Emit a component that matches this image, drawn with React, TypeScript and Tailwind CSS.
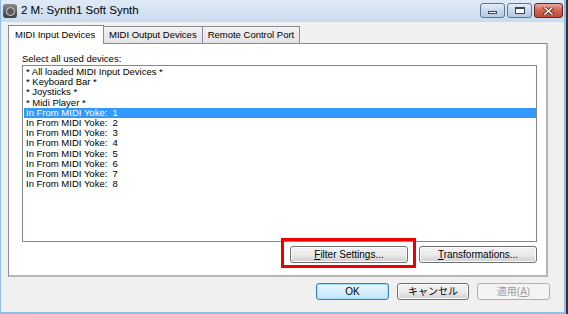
import type { ReactNode } from "react";

const ui = { fontFamily: '"Liberation Sans", "Noto Sans CJK JP", sans-serif' };

const devices = [
  "* All loaded MIDI Input Devices *",
  "* Keyboard Bar *",
  "* Joysticks *",
  "* Midi Player *",
  "In From MIDI Yoke:  1",
  "In From MIDI Yoke:  2",
  "In From MIDI Yoke:  3",
  "In From MIDI Yoke:  4",
  "In From MIDI Yoke:  5",
  "In From MIDI Yoke:  6",
  "In From MIDI Yoke:  7",
  "In From MIDI Yoke:  8",
];

function Button({
  children,
  w,
  variant = "normal",
}: {
  children: ReactNode;
  w: string;
  variant?: "normal" | "default" | "disabled";
}) {
  const cls =
    variant === "default"
      ? "border-[#3c7fb1] bg-gradient-to-b from-[#eaf6fd] to-[#bee6fd] text-black shadow-[inset_0_0_0_1px_#a8e0fb]"
      : variant === "disabled"
        ? "border-[#adb2b5] bg-[#f4f4f4] text-[#9c9c9c]"
        : "border-[#707070] bg-gradient-to-b from-[#f2f2f2] via-[#ebebeb] to-[#cfcfcf] text-black shadow-[inset_0_0_0_1px_#fcfcfc]";
  return (
    <div
      className={`${w} flex h-[17px] items-center justify-center rounded-[3px] border text-[10px] leading-none ${cls}`}
    >
      {children}
    </div>
  );
}

function Tab({ label, active }: { label: string; active?: boolean }) {
  if (active) {
    return (
      <div className="relative z-10 -mb-px flex h-[19px] w-[96px] items-center border border-b-0 border-[#898c95] bg-white pl-[6px] text-[9.5px]">
        {label}
      </div>
    );
  }
  return (
    <div className="-ml-px flex h-[17px] items-center border border-b-0 border-[#898c95] bg-gradient-to-b from-[#f2f2f2] to-[#e3e3e3] px-[5px] text-[9.5px]">
      {label}
    </div>
  );
}

function CaptionButton({ kind }: { kind: "min" | "max" | "close" }) {
  if (kind === "close") {
    return (
      <div className="flex h-[15px] w-[29px] items-center justify-center rounded-[3px] border border-[#5e2a24] bg-gradient-to-b from-[#e9a99a] via-[#d0634f] to-[#c24a35]">
        <svg width="11" height="8" viewBox="0 0 11 8">
          <path d="M2 1 L9 7 M9 1 L2 7" stroke="#4a1f18" strokeWidth="3" strokeLinecap="square" />
          <path d="M2 1 L9 7 M9 1 L2 7" stroke="#ffffff" strokeWidth="1.6" strokeLinecap="square" />
        </svg>
      </div>
    );
  }
  return (
    <div className="flex h-[15px] w-[25px] items-center justify-center rounded-[3px] border border-[#5f7794] bg-gradient-to-b from-[#e4edf7] via-[#c8d8ea] to-[#b5c9e0]">
      {kind === "min" ? (
        <div className="mt-[4px] h-[3px] w-[9px] border border-[#39465a] bg-white" />
      ) : (
        <div className="h-[7px] w-[10px] border border-[#39465a] border-t-[2px] bg-white" />
      )}
    </div>
  );
}

export default function App() {
  return (
    <div className="h-[314px] w-[568px] overflow-hidden bg-[#343434]" style={ui}>
      <div className="flex h-[314px] w-[566px] flex-col border-r-2 border-b-2 border-l border-[#8fbde6] bg-[#f0f0f0]">
        {/* title bar */}
        <div className="flex h-[22px] shrink-0 items-center bg-gradient-to-b from-[#dfeaf6] to-[#c8dbef] pl-[2px] pr-[1px]">
          <div className="flex h-[14px] w-[14px] items-center justify-center rounded-[3px] bg-gradient-to-b from-[#8a8a8a] to-[#3e3e3e]">
            <div className="h-[9px] w-[9px] rounded-full border border-[#d0d0d0] bg-[#5a5a5a]" />
          </div>
          <div className="ml-[4px] text-[11.5px] text-black">2 M: Synth1 Soft Synth</div>
          <div className="ml-auto flex gap-[2px] self-start pt-[3px]">
            <CaptionButton kind="min" />
            <CaptionButton kind="max" />
            <CaptionButton kind="close" />
          </div>
        </div>

        {/* tabs */}
        <div className="ml-[7px] mt-[3px] flex items-end">
          <Tab label="MIDI Input Devices" active />
          <Tab label="MIDI Output Devices" />
          <Tab label="Remote Control Port" />
        </div>

        {/* tab panel */}
        <div className="ml-[7px] flex h-[234px] w-[540px] flex-col border border-[#898c95] border-r-2 border-b-2 border-r-[#b5b5b5] border-b-[#b5b5b5] bg-white pl-[13px]">
          <div className="mt-[9px] text-[9.5px] leading-[11px]">Select all used devices:</div>
          <div className="mt-[1px] h-[177px] w-[515px] border border-[#828790] pl-px pt-px">
            {devices.map((d, i) => (
              <div
                key={d}
                className={`h-[10.2px] whitespace-pre pl-[2px] text-[9.5px] leading-[10.2px] ${
                  i === 4 ? "bg-[#3399ff] text-white" : "text-black"
                }`}
              >
                {d}
              </div>
            ))}
          </div>
          <div className="mt-[4px] flex gap-[11px] pl-[268px]">
            <div className="relative">
              <Button w="w-[118px]">
                <span>
                  <span className="underline">F</span>ilter Settings...
                </span>
              </Button>
              <div className="absolute -top-[8px] -left-[9px] h-[30px] w-[135px] border-[3px] border-[#ee0000]" />
            </div>
            <Button w="w-[118px]">
              <span>
                <span className="underline">T</span>ransformations...
              </span>
            </Button>
          </div>
        </div>

        {/* dialog buttons */}
        <div className="mt-[6px] flex gap-[8px] pl-[315px]">
          <Button w="w-[73px]" variant="default">
            OK
          </Button>
          <Button w="w-[72px]">キャンセル</Button>
          <Button w="w-[73px]" variant="disabled">
            <span>
              適用(<span className="underline">A</span>)
            </span>
          </Button>
        </div>
      </div>
    </div>
  );
}
